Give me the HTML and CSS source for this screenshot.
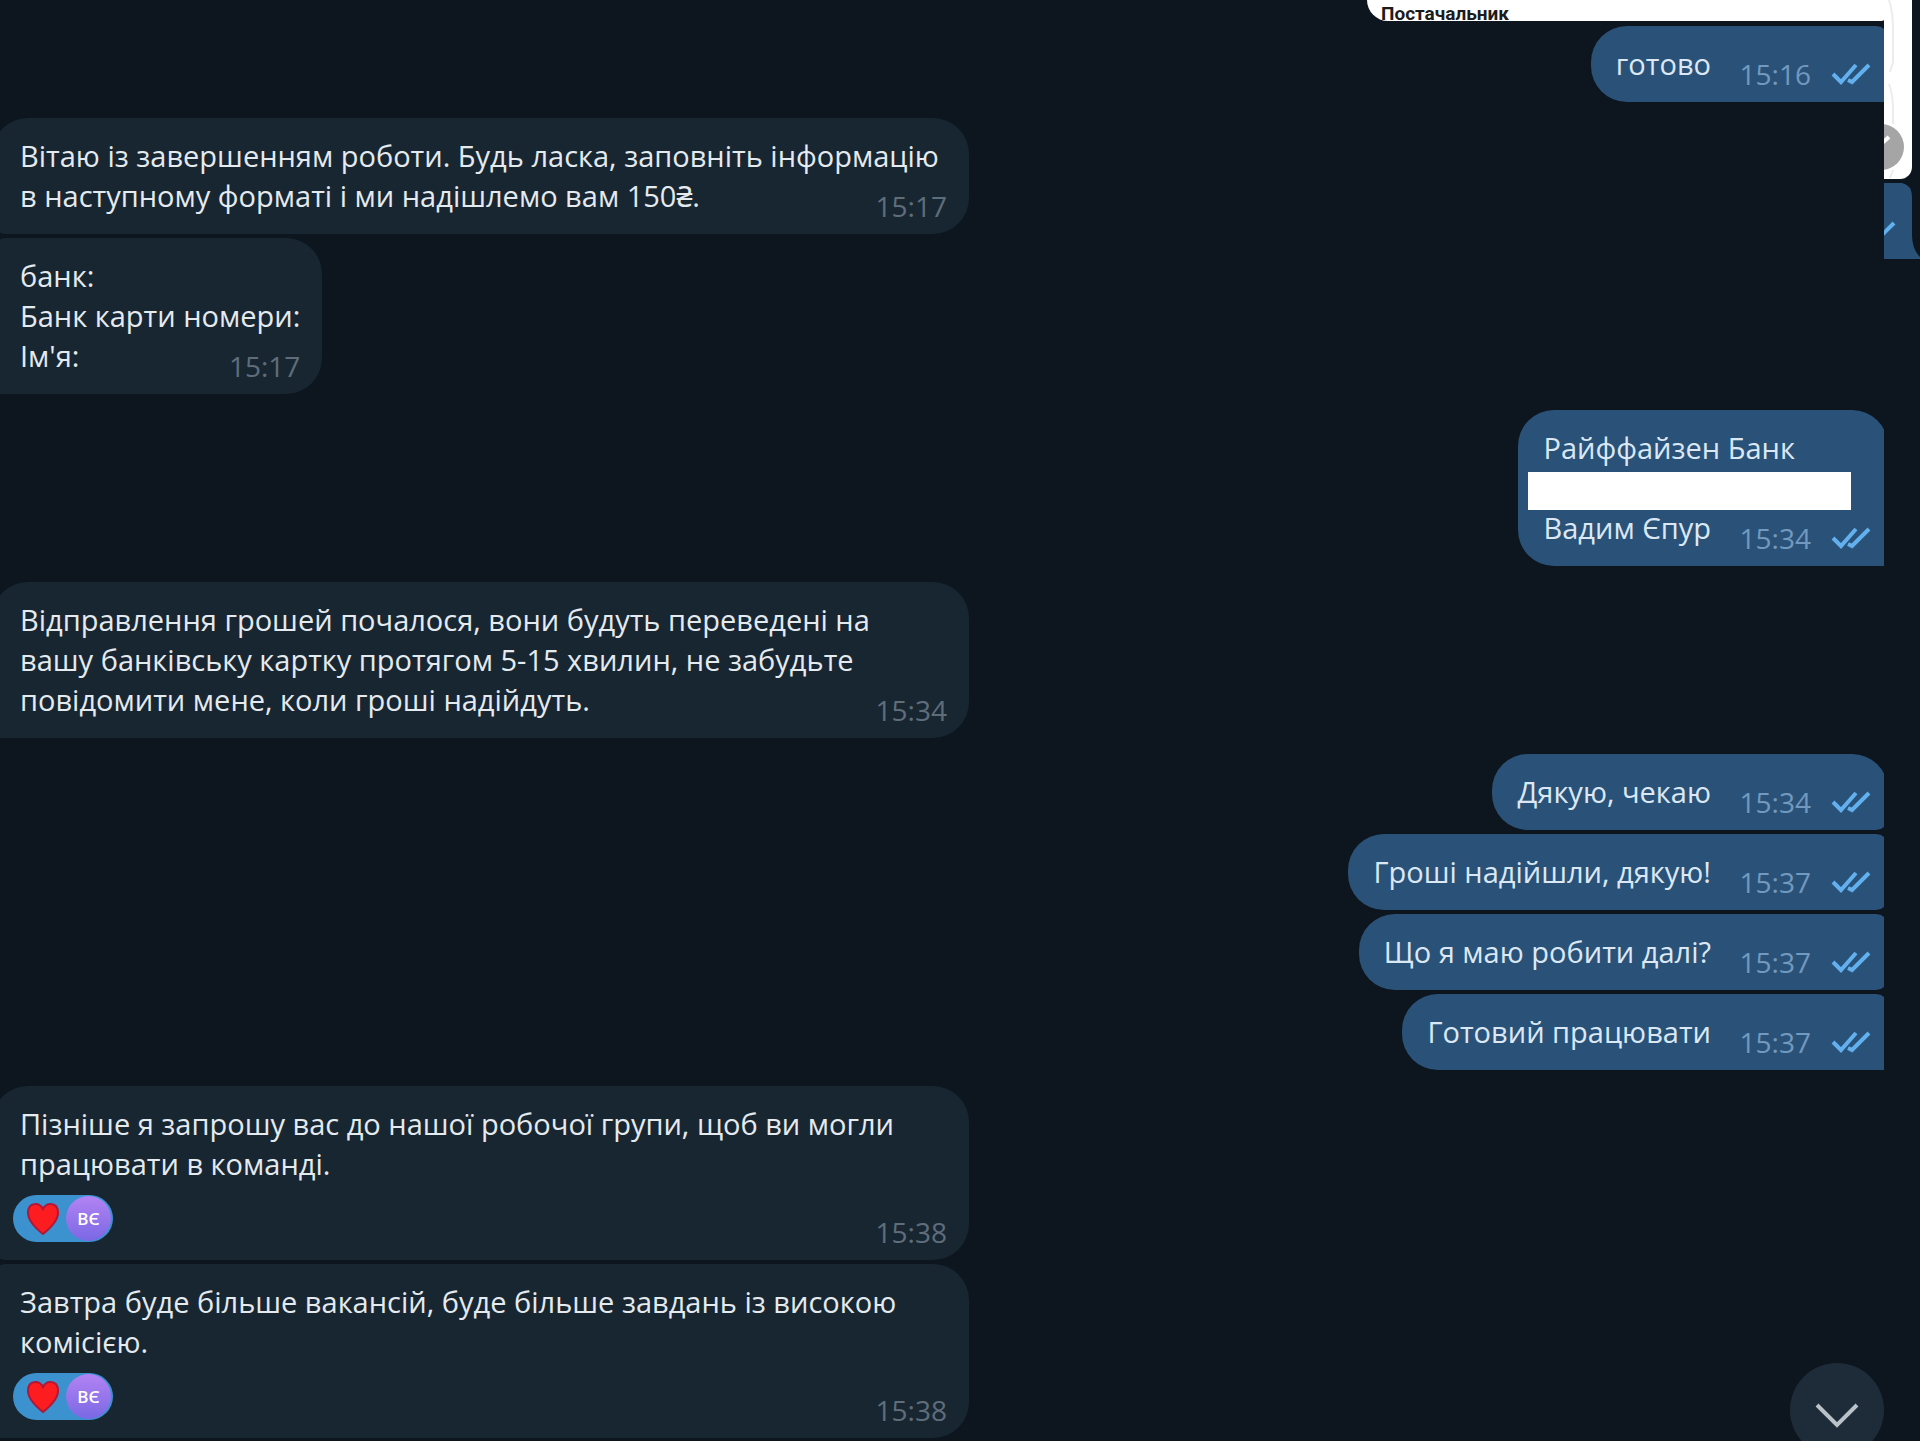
FILE: index.html
```html
<!DOCTYPE html>
<html lang="uk">

<head>
    <meta charset="utf-8">
    <title>Чат</title>
    <link rel="stylesheet" href="styles.css">
</head>

<body>
    <svg class="defs">
        <symbol id="checks" viewBox="0 0 40 22">
            <path d="M2 11 L10 19 L25 2 M17 17 L21 19 L38 2" />
        </symbol>
        <symbol id="heart" viewBox="0 0 34 34">
            <path d="M17 32 C12 28 2 20 2 11 C2 5 5 2 9.500 2 C13 2 15.500 4 17 7 C18.500 4 21 2 24.500 2 C29 2 32 5 32 11 C32 20 22 28 17 32 Z" />
        </symbol>
    </svg>

    <main class="chat">
        <div class="group out">
            <div class="photo">Постачальник</div>
            <div class="bubble">
                <p>готово<span class="space"></span></p>
                <div class="meta"><time>15:16</time><svg class="checks"><use href="#checks" /></svg></div>
            </div>
        </div>

        <div class="group in">
            <div class="bubble">
                <p>Вітаю із завершенням роботи. Будь ласка, заповніть інформацію в наступному форматі і ми надішлемо вам 150₴.</p>
                <div class="meta"><time>15:17</time></div>
            </div>
            <div class="bubble">
                <p>банк:<br>Банк карти номери:<br>Ім'я:</p>
                <div class="meta"><time>15:17</time></div>
            </div>
        </div>

        <div class="group out">
            <div class="bubble">
                <p>Райффайзен Банк<span class="hidden-number"></span>Вадим Єпур<span class="space"></span></p>
                <div class="meta"><time>15:34</time><svg class="checks"><use href="#checks" /></svg></div>
            </div>
        </div>

        <div class="group in">
            <div class="bubble">
                <p>Відправлення грошей почалося, вони будуть переведені на вашу банківську картку протягом 5-15 хвилин, не забудьте повідомити мене, коли гроші надійдуть.</p>
                <div class="meta"><time>15:34</time></div>
            </div>
        </div>

        <div class="group out">
            <div class="bubble">
                <p>Дякую, чекаю<span class="space"></span></p>
                <div class="meta"><time>15:34</time><svg class="checks"><use href="#checks" /></svg></div>
            </div>
            <div class="bubble">
                <p>Гроші надійшли, дякую!<span class="space"></span></p>
                <div class="meta"><time>15:37</time><svg class="checks"><use href="#checks" /></svg></div>
            </div>
            <div class="bubble">
                <p>Що я маю робити далі?<span class="space"></span></p>
                <div class="meta"><time>15:37</time><svg class="checks"><use href="#checks" /></svg></div>
            </div>
            <div class="bubble">
                <p>Готовий працювати<span class="space"></span></p>
                <div class="meta"><time>15:37</time><svg class="checks"><use href="#checks" /></svg></div>
            </div>
        </div>

        <div class="group in">
            <div class="bubble">
                <div class="content">
                    <p>Пізніше я запрошу вас до нашої робочої групи, щоб ви могли працювати в команді.</p>
                    <button type="button" class="reaction"><svg class="heart"><use href="#heart" /></svg><span class="avatar">ВЄ</span></button>
                </div>
                <div class="meta"><time>15:38</time></div>
            </div>
            <div class="bubble">
                <div class="content">
                    <p>Завтра буде більше вакансій, буде більше завдань із високою комісією.</p>
                    <button type="button" class="reaction"><svg class="heart"><use href="#heart" /></svg><span class="avatar">ВЄ</span></button>
                </div>
                <div class="meta"><time>15:38</time></div>
            </div>
        </div>
    </main>

    <aside class="edge">
        <div class="edge-photo">
            <svg viewBox="0 0 28 179">
                <path class="line" d="M5 0 Q9 12 9 30 V62 L6 72 M5 84 Q9 94 9 110 V124 M9 170 L6 178" />
                <circle cx="-3" cy="147" r="23" />
                <path class="arrow" d="M-4 145 L5 137" />
            </svg>
        </div>
        <svg class="edge-bubble" viewBox="0 0 36 76">
            <path class="fill" d="M0 0 H18 Q28 2 28 14 V52 Q28 66 36 74 V76 H0 Z" />
            <path class="tick" d="M-2 52 L10 40" />
        </svg>
    </aside>

    <button type="button" class="scroll-down" aria-label="Вниз">
        <svg viewBox="0 0 94 94"><path d="M27 42 L47 62 L67 42" /></svg>
    </button>
</body>

</html>
```
FILE: styles.css
```css
body {
    margin: 0;
    min-height: 100vh;
    display: flex;
    overflow: hidden;
    background: #0d151f;
    color: #e4eaee;
    font-family: "Open Sans", "Noto Sans", sans-serif;
    font-size: 29px;
    line-height: 40px;
}

p {
    margin: 0;
}

button {
    border: none;
    padding: 0;
    font-family: inherit;
    cursor: pointer;
}

.defs {
    display: none;
}

/* bubbles run a little past both sides of the chat and get clipped */
.chat {
    flex: 1;
    overflow: hidden;
    display: flex;
    flex-direction: column;
    gap: 16px;
}

.group {
    display: flex;
    flex-direction: column;
    gap: 4px;
    margin: 0 -4px 0 -8px;
}

.in {
    align-items: flex-start;
}

.out {
    align-items: flex-end;
}

.bubble {
    display: grid;
    box-sizing: border-box;
    max-width: 977px;
    padding: 18px 22px 18px 28px;
}

.bubble > * {
    grid-area: 1 / 1;
}

.in .bubble {
    background: #182632;
    border-radius: 14px 36px 36px 14px;
}

.in .bubble:first-child {
    border-top-left-radius: 36px;
}

.in .bubble:last-child {
    border-bottom-left-radius: 0;
}

.out .bubble {
    background: #2a5278;
    color: #dbe8f4;
    padding: 18px 17px 18px 25px;
    border-radius: 36px 12px 12px 36px;
}

.out .bubble:first-child {
    border-top-right-radius: 36px;
}

.out .bubble:last-child {
    border-bottom-right-radius: 0;
}

.photo {
    width: 521px;
    height: 21px;
    margin-bottom: 1px;
    box-sizing: border-box;
    padding: 2px 14px 0;
    overflow: hidden;
    background: #fff;
    color: #1c1c1c;
    border-radius: 0 0 12px 36px;
    font: bold 19px/24px Roboto, sans-serif;
}

.meta {
    align-self: end;
    justify-self: end;
    margin-bottom: -4px;
    display: flex;
    gap: 20px;
    color: #5f6d7a;
    font-size: 28px;
    line-height: 28px;
}

.out .meta {
    color: #7299bf;
}

/* keeps the last line clear of the time */
.space {
    display: inline-block;
    width: 160px;
}

.checks {
    width: 40px;
    height: 22px;
    margin-top: 3px;
    fill: none;
    stroke: #62b0ee;
    stroke-width: 4;
}

.hidden-number {
    display: block;
    width: 323px;
    height: 38px;
    margin: 4px 0 -2px -15px;
    background: #fff;
}

.reaction {
    display: flex;
    align-items: center;
    justify-content: space-between;
    box-sizing: border-box;
    width: 100px;
    height: 47px;
    margin: 11px 0 0 -7px;
    padding: 0 2px 0 13px;
    border-radius: 24px;
    background: #3c92cf;
}

.heart {
    width: 34px;
    height: 34px;
    fill: #fd1c20;
    stroke: #b01838;
    stroke-width: 2;
}

.avatar {
    width: 45px;
    height: 45px;
    border-radius: 50%;
    background: linear-gradient(#b383f3, #7a68e4);
    color: #fff;
    font-size: 17px;
    font-weight: 600;
    line-height: 46px;
    text-align: center;
}

.edge {
    width: 36px;
}

.edge-photo {
    width: 28px;
    height: 179px;
    margin-bottom: 4px;
    overflow: hidden;
    background: #fff;
    border-radius: 0 0 12px 0;
}

.edge svg {
    display: block;
}

.edge-photo circle {
    fill: #a5a5a5;
}

.edge-photo path {
    fill: none;
    stroke: #ececee;
    stroke-width: 2;
}

.edge-photo .arrow {
    stroke: #fff;
    stroke-width: 4;
}

.edge-bubble {
    width: 36px;
    height: 76px;
}

.fill {
    fill: #2a5278;
}

.tick {
    stroke: #62b0ee;
    stroke-width: 4;
}

.scroll-down {
    position: fixed;
    right: 36px;
    bottom: -16px;
    width: 94px;
    height: 94px;
    border-radius: 50%;
    background: #1e2c3a;
}

.scroll-down path {
    fill: none;
    stroke: #b9c1c9;
    stroke-width: 4;
}
```
